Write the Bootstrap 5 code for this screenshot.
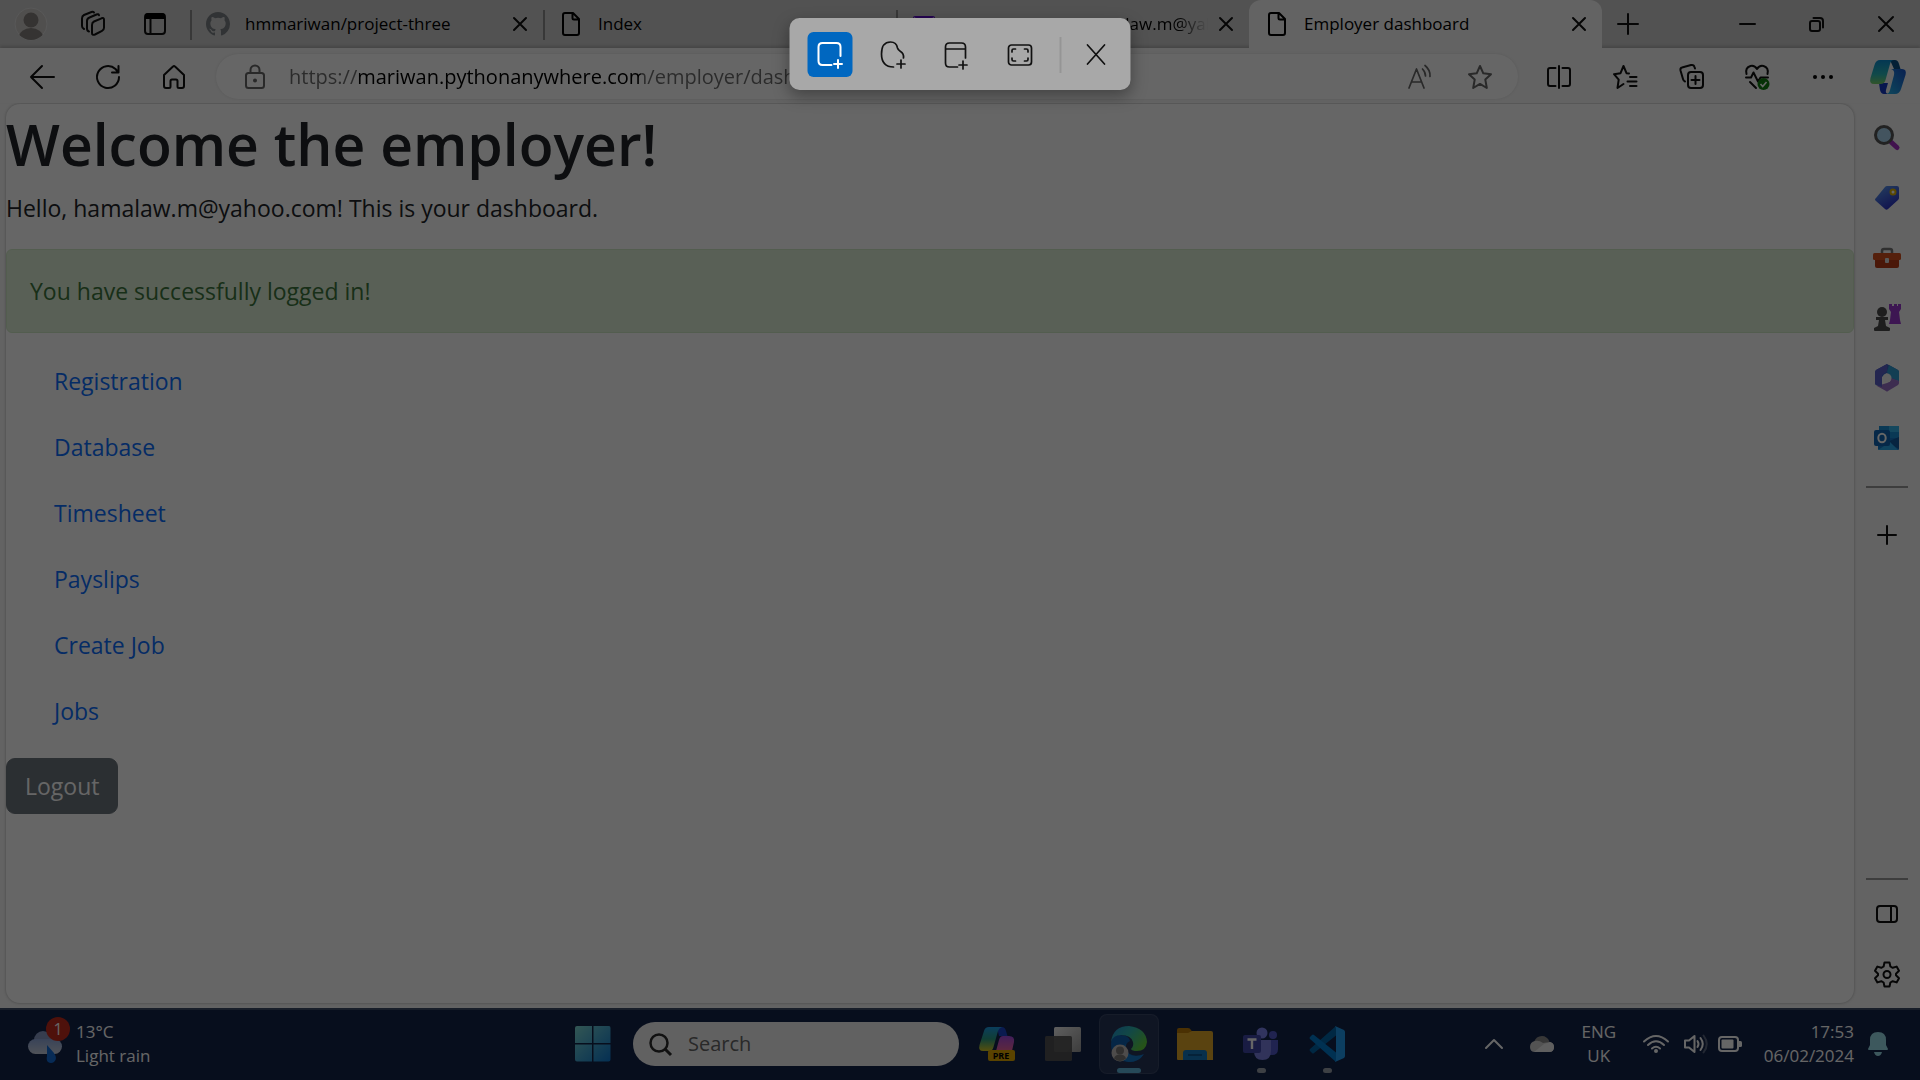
<!DOCTYPE html>
<html lang="en">
<head>
<meta charset="utf-8">
<meta name="viewport" content="width=device-width, initial-scale=1">
<title>Employer dashboard</title>
<link href="https://cdn.jsdelivr.net/npm/bootstrap@5.3.0/dist/css/bootstrap.min.css" rel="stylesheet">
<style>
  body { font-family: "Open Sans", "Noto Sans", sans-serif; background: #f7f7f7; }
  svg { display: block; flex: none; overflow: visible; }
  .line { fill: none; stroke: currentColor; stroke-width: 2; stroke-linecap: round; stroke-linejoin: round; }
  .icon-btn { border: 0; background: none; padding: 0; color: #111; display: flex; align-items: center; justify-content: center; flex: none; }

  /* tab strip */
  .tab-strip { height: 48px; background: #cdcdcd; font-size: 17px; line-height: 24px; color: #000; }
  .strip-tools { width: 190px; flex: none; }
  .strip-tools .icon-btn { width: 62px; height: 48px; }
  .browser-tab { flex: 0 1 353px; min-width: 0; padding: 0 11px 0 16px; position: relative; }
  .browser-tab + .browser-tab::before, .first-tab::before { content: ""; position: absolute; left: 0; top: 10px; height: 30px; width: 2px; background: #8c8c8c; }
  .browser-tab.active-tab { background: #f7f7f7; border-radius: 12px 12px 0 0; }
  .browser-tab.active-tab::before { display: none; }
  .tab-title { color: #000; text-decoration: none; white-space: nowrap; overflow: hidden; flex: 1; margin: 0 6px 0 15px; }
  .tab-fade { -webkit-mask-image: linear-gradient(to right, #000 88%, transparent); mask-image: linear-gradient(to right, #000 88%, transparent); }
  .tab-x { width: 24px; height: 24px; }
  .win-btn { width: 69px; height: 48px; }
  .new-tab { width: 52px; height: 48px; }

  /* toolbar */
  .nav-row { height: 55px; padding: 2px 0 0 9px; background: #f7f7f7; box-shadow: 0 -2px 3px rgba(0,0,0,.16); position: relative; }
  .active-tab { z-index: 1; }
  .nav-btn { width: 66px; height: 53px; }
  .nav-btn:last-child { width: 64px; }
  .address { height: 45px; border-radius: 23px; background: #fff; margin: 0 8px 0 9px; padding: 0 8px 0 28px; color: #666; box-shadow: 0 0 3px rgba(0,0,0,.1); }
  .address input { border: 0; outline: 0; min-width: 0; padding: 0; margin-left: 23px; font-size: 20px; line-height: 28px; color: #333;
    background: linear-gradient(to right, #6b6b6b 69px, #000 69px 352px, #6b6b6b 352px); -webkit-background-clip: text; background-clip: text; -webkit-text-fill-color: transparent; }
  .address .icon-btn { color: #666; width: 60px; height: 44px; }

  /* page */
  .page-pane { margin: 1px 0 5px 6px; padding-top: 4px; background: #fff; border-radius: 14px; overflow: hidden; box-shadow: 0 0 3px rgba(0,0,0,.3); font-size: 23px; line-height: 36px; color: #212529; }
  .page-pane h1 { font-size: 57px; line-height: 72px; font-weight: 600; margin-bottom: 10px; }
  .page-pane p { margin-bottom: 23px; }
  .page-pane .alert { padding: 23px; border-radius: 6px; margin-bottom: 15px; background: #dff0d8; border-color: #d0e9c6; color: #3c763d; }
  .page-links { padding-left: 48px; margin-bottom: 14px; }
  .page-links a { display: inline-block; padding: 15px 0; text-decoration: none; color: #0d6efd; vertical-align: top; }
  .page-pane .btn { font-size: 23px; line-height: 36px; padding: 9px 18px; border-radius: 9px; }

  /* side rail */
  .side-rail { width: 66px; flex: none; padding-top: 5px; }
  .side-rail .icon-btn { width: 66px; height: 60px; }
  .side-rail hr { width: 42px; margin: 0 0 0 12px; border-top: 2px solid #999; opacity: 1; }
  .side-rail .upper-rule { margin: 18px 0 17px 12px; }

  /* taskbar */
  .task-bar { height: 72px; background: #122349; border-top: 2px solid #3d4c66; padding-bottom: 2px; color: #fff; font-size: 17px; line-height: 24px; }
  .side-part { flex: 1 1 0; min-width: 0; }
  .weather { color: #fff; text-align: left; gap: 14px; padding-left: 28px; height: 68px; line-height: 24px; }
  .weather svg { margin-bottom: 6px; }
  .weather span { margin-left: -1px; }
  .task-btn { width: 66px; height: 68px; position: relative; }
  .task-btn.current svg { position: relative; }
  .task-btn.current::before { content: ""; position: absolute; inset: 4px 3px; border-radius: 8px; background: rgba(255,255,255,.09); border: 1px solid rgba(255,255,255,.08); }
  .task-btn.opened::after, .task-btn.current::after { content: ""; position: absolute; bottom: 5px; width: 9px; height: 5px; border-radius: 3px; background: #9aa0aa; }
  .task-btn.current::after { width: 24px; background: #5fb6dd; }
  .task-search { width: 326px; height: 44px; border-radius: 22px; background: #f3f3f3; margin: 0 5px 0 7px; padding: 0 16px; color: #222; }
  .task-search input { border: 0; outline: 0; background: none; min-width: 0; width: 100%; padding: 0; margin-left: 16px; font-size: 20px; line-height: 28px; color: #222; }
  .task-search input::placeholder { color: #666; opacity: 1; }
  .tray-btn { height: 68px; color: #fff; line-height: 24px; }
  .bell-btn { padding: 0 32px 0 14px; }
  .w-48 { width: 48px; } .w-66 { width: 66px; } .w-34 { width: 34px; }

  /* capture layer */
  .dimmer { position: absolute; inset: 0; background: rgba(0,0,0,.6); pointer-events: none; z-index: 5; }
  .capture-bar { position: absolute; z-index: 6; top: 18px; left: 50%; transform: translateX(-50%); background: #a8a8a8; border-radius: 10px; padding: 14px 12px 13px 18px; box-shadow: 0 6px 16px rgba(0,0,0,.35); }
  .capture-bar .icon-btn { width: 45px; height: 45px; border-radius: 6px; margin-right: 18px; }
  .capture-bar .chosen { background: #0067c0; color: #fff; }
  .capture-bar .bar-rule { width: 2px; height: 36px; background: #959595; margin-right: 12px; }
  .capture-bar .icon-btn:last-child { margin-right: 0; }
</style>
<script src="https://cdn.jsdelivr.net/npm/bootstrap@5.3.0/dist/js/bootstrap.bundle.min.js"></script>
</head>
<body>
<div class="position-relative min-vh-100 d-flex flex-column overflow-hidden">

  <header class="tab-strip d-flex">
    <div class="strip-tools d-flex">
      <button class="icon-btn" aria-label="Profile"><svg width="34" height="34" viewBox="0 0 34 34"><defs><clipPath id="pc"><circle cx="17" cy="17" r="16"/></clipPath></defs><circle cx="17" cy="17" r="16" fill="#c9c5c2" stroke="#ddd" stroke-width="1"/><g clip-path="url(#pc)" fill="#85817e"><circle cx="17" cy="13" r="7.500"/><ellipse cx="17" cy="30" rx="12" ry="9"/></g></svg></button>
      <button class="icon-btn" aria-label="Workspaces"><svg width="26" height="26" viewBox="0 0 26 26" class="line"><path d="M14 10.500l7.500-3.200q2.500-1 2.500 1.500v8q0 2-2 3L15 23.500q-3 1.200-3-1.500v-8q0-2.500 2-3.500z"/><path d="M9 20.500Q7 20 7 17.500V10q0-2.500 2.500-3.500l7-3q2-.8 2.500.8M4 18Q2 17 2 15V7.500Q2 5 4 4l7.500-3q1.500-.5 2.500.5"/></svg></button>
      <button class="icon-btn" aria-label="Tab actions"><svg width="24" height="24" viewBox="0 0 24 24"><rect x="2" y="2" width="20" height="20" rx="3" class="line"/><path d="M2 2.500Q3 1 5 1h14q2 0 3 1.500V7H2z"/><path d="M7.500 7v15" class="line"/></svg></button>
    </div>
    <div class="browser-tab first-tab d-flex align-items-center">
      <svg width="24" height="24" viewBox="0 0 16 16"><path fill="#7b8085" d="M8 0C3.580 0 0 3.580 0 8c0 3.540 2.290 6.530 5.470 7.590.4.070.55-.17.55-.38 0-.19-.01-.82-.01-1.490-2.010.37-2.530-.49-2.690-.94-.09-.23-.48-.94-.82-1.130-.28-.15-.68-.52-.01-.53.63-.01 1.080.58 1.230.82.72 1.210 1.870.87 2.330.66.07-.52.28-.87.51-1.070-1.780-.2-3.640-.89-3.640-3.950 0-.87.31-1.590.82-2.150-.08-.2-.36-1.020.08-2.120 0 0 .67-.21 2.200.82a7.700 7.700 0 0 1 4 0c1.530-1.040 2.200-.82 2.200-.82.44 1.100.16 1.920.08 2.120.51.56.82 1.270.82 2.150 0 3.070-1.870 3.750-3.650 3.950.29.25.54.73.54 1.480 0 1.070-.01 1.930-.01 2.200 0 .21.15.46.55.38A8 8 0 0 0 16 8c0-4.420-3.580-8-8-8z"/></svg>
      <a class="tab-title" href="#">hmmariwan/project-three</a>
      <button class="icon-btn tab-x" aria-label="Close tab"><svg width="12" height="12" viewBox="0 0 12 12" class="line"><path d="M0 0l12 12M12 0L0 12"/></svg></button>
    </div>
    <div class="browser-tab d-flex align-items-center">
      <svg width="24" height="24" viewBox="0 0 24 24" class="line"><path d="M6 1h8l6 6v14q0 2-2 2H6q-2 0-2-2V3q0-2 2-2zM13.500 1v5q0 1.500 1.500 1.500h5"/></svg>
      <a class="tab-title" href="#">Index</a>
      <span class="tab-x"></span>
    </div>
    <div class="browser-tab d-flex align-items-center">
      <svg width="24" height="24" viewBox="0 0 24 24"><rect x="1" y="4" width="22" height="17" rx="2" fill="#5a0cc8"/><path d="M2 6l10 8 10-8" fill="none" stroke="#fff" stroke-width="2"/></svg>
      <a class="tab-title tab-fade" href="#">(9,142 unread) - hamalaw.m@yahoo.com</a>
      <button class="icon-btn tab-x" aria-label="Close tab"><svg width="12" height="12" viewBox="0 0 12 12" class="line"><path d="M0 0l12 12M12 0L0 12"/></svg></button>
    </div>
    <div class="browser-tab active-tab d-flex align-items-center">
      <svg width="24" height="24" viewBox="0 0 24 24" class="line"><path d="M6 1h8l6 6v14q0 2-2 2H6q-2 0-2-2V3q0-2 2-2zM13.500 1v5q0 1.500 1.500 1.500h5"/></svg>
      <a class="tab-title" href="#">Employer dashboard</a>
      <button class="icon-btn tab-x" aria-label="Close tab"><svg width="12" height="12" viewBox="0 0 12 12" class="line"><path d="M0 0l12 12M12 0L0 12"/></svg></button>
    </div>
    <button class="icon-btn new-tab" aria-label="New tab"><svg width="20" height="20" viewBox="0 0 20 20" class="line"><path d="M10 0v20M0 10h20"/></svg></button>
    <div class="d-flex ms-auto">
      <button class="icon-btn win-btn" aria-label="Minimise"><svg width="15" height="15" viewBox="0 0 15 15" class="line"><path d="M0 7h15"/></svg></button>
      <button class="icon-btn win-btn" aria-label="Restore"><svg width="15" height="15" viewBox="0 0 15 15" class="line"><rect x="1" y="4" width="10" height="10" rx="2"/><path d="M4.500 1H11q3 0 3 3v6.500"/></svg></button>
      <button class="icon-btn win-btn" aria-label="Close"><svg width="14" height="14" viewBox="0 0 14 14" class="line"><path d="M0 0l14 14M14 0L0 14"/></svg></button>
    </div>
  </header>

  <nav class="nav-row d-flex align-items-center" aria-label="Browser">
    <button class="icon-btn nav-btn" aria-label="Back"><svg width="24" height="24" viewBox="0 0 24 24" class="line"><path d="M24 12H1M12 1L1 12l11 11"/></svg></button>
    <button class="icon-btn nav-btn" aria-label="Refresh"><svg width="24" height="24" viewBox="0 0 24 24" class="line"><path d="M23 12a11 11 0 1 1-3.500-8L22 7M22.500 1v6.500H16"/></svg></button>
    <button class="icon-btn nav-btn" aria-label="Home"><svg width="24" height="24" viewBox="0 0 24 24" class="line"><path d="M2 10L11 1.500q1-1 2 0L22 10v11q0 2-2 2h-3q-1.500 0-1.500-1.500V16q0-1.500-1.500-1.500h-4Q8.500 14.500 8.500 16v5.500Q8.500 23 7 23H4q-2 0-2-2z"/></svg></button>
    <div class="address flex-grow-1 d-flex align-items-center">
      <svg width="22" height="24" viewBox="0 0 22 24" class="line"><rect x="2" y="8" width="18" height="15" rx="2.500"/><path d="M6.500 8V5a4.500 4.500 0 0 1 9 0v3"/><circle cx="11" cy="15.500" r="1" fill="currentColor"/></svg>
      <input class="flex-grow-1" type="text" aria-label="Address" value="https://mariwan.pythonanywhere.com/employer/dashboard">
      <button class="icon-btn" aria-label="Read aloud"><svg width="24" height="24" viewBox="0 0 24 24" class="line"><path d="M1 23L8.500 4 16 23M3.500 17h10M14.500 4q3 3 3 7M17 .5q5.500 4.500 5 11" stroke-width="1.700"/></svg></button>
      <button class="icon-btn" aria-label="Favourite"><svg width="24" height="24" viewBox="0 0 24 24" class="line"><path d="M12 1l3.300 7.300 7.700.9-5.700 5.400L18.800 23 12 18.900 5.200 23l1.500-8.400L1 9.200l7.700-.9z"/></svg></button>
    </div>
    <button class="icon-btn nav-btn" aria-label="Split screen"><svg width="24" height="24" viewBox="0 0 24 24" class="line"><path d="M12 1v22M8.500 3H3Q1 3 1 5v14q0 2 2 2h5.500M15.500 3H21q2 0 2 2v14q0 2-2 2h-5.500"/></svg></button>
    <button class="icon-btn nav-btn" aria-label="Favourites"><svg width="24" height="24" viewBox="0 0 24 24" class="line"><path d="M16 8.500l-2.500-.3L10.500 1 7.500 8.200 1 9.200l4.700 5.400L4.500 23l6-4M17 12h6.500M14.500 16.500h9M17 21h6.500"/></svg></button>
    <button class="icon-btn nav-btn" aria-label="Collections"><svg width="25" height="25" viewBox="0 0 25 25" class="line"><rect x="9" y="8" width="15" height="16" rx="3"/><path d="M16.500 12v8M12.500 16h8M6 17.500q-1.500-.5-2-2.500L1.500 6.500Q1 4 3 3.500l9-2.500q3-.5 3.500 2l.5 1.500"/></svg></button>
    <button class="icon-btn nav-btn" aria-label="Browser essentials"><svg width="26" height="26" viewBox="0 0 26 26"><path class="line" d="M2.500 10Q1 3.500 6.500 2 10.500 1 13 5q2.500-4 6.500-3Q25 3.500 23.500 10M2 13.500h5l2.500-5 4.500 9 2.500-4H24M6 18l6 6"/><circle cx="19.500" cy="20" r="6" fill="#107c10"/><path d="M16.500 20l2.200 2.500L22.500 18" fill="none" stroke="#fff" stroke-width="1.600"/></svg></button>
    <button class="icon-btn nav-btn" aria-label="Settings and more"><svg width="22" height="6" viewBox="0 0 22 6"><circle cx="3" cy="3" r="2"/><circle cx="11" cy="3" r="2"/><circle cx="19" cy="3" r="2"/></svg></button>
    <button class="icon-btn nav-btn" aria-label="Copilot"><svg width="36" height="34" viewBox="0 0 36 34"><defs><linearGradient id="ca" x1="0" y1="0" x2="0" y2="1"><stop offset="0" stop-color="#0a8bd0"/><stop offset=".6" stop-color="#2bb8b8"/><stop offset="1" stop-color="#7bd36a"/></linearGradient><linearGradient id="cb" x1="1" y1="0" x2="0" y2="1"><stop offset="0" stop-color="#1650c8"/><stop offset="1" stop-color="#26b4e6"/></linearGradient></defs><path d="M9 23h9l-2 7q-1 4 3 4h-5q-3 0-4-4z" fill="#1638c4"/><path d="M20 0h5q3 0 4 4l1.500 5H24z" fill="#0a4f86"/><path d="M10 0h14q-3 0-4 4l-4.500 16q-1 4-5 4H4q-5 0-3.500-6L4.500 5Q6 0 10 0z" fill="url(#ca)"/><path d="M25.500 9H32q5 0 3.500 6L31 29q-1.500 5-6 5h-9q3 0 4-4l4-15q1-5-3-6z" fill="url(#cb)"/></svg></button>
  </nav>

  <div class="d-flex flex-grow-1">
    <main class="page-pane flex-grow-1">
      <h1>Welcome the employer!</h1>
      <p>Hello, hamalaw.m@yahoo.com! This is your dashboard.</p>
      <div class="alert" role="alert">You have successfully logged in!</div>
      <ul class="page-links list-unstyled">
        <li><a href="#">Registration</a></li>
        <li><a href="#">Database</a></li>
        <li><a href="#">Timesheet</a></li>
        <li><a href="#">Payslips</a></li>
        <li><a href="#">Create Job</a></li>
        <li><a href="#">Jobs</a></li>
      </ul>
      <button class="btn btn-secondary d-block">Logout</button>
    </main>

    <aside class="side-rail d-flex flex-column">
      <button class="icon-btn" aria-label="Search"><svg width="26" height="26" viewBox="0 0 26 26"><path d="M17 17l6 5.500" stroke="#a32fc4" stroke-width="5" stroke-linecap="round"/><circle cx="10" cy="10" r="8.500" fill="#a8d3ee" stroke="#555" stroke-width="3"/></svg></button>
      <button class="icon-btn" aria-label="Shopping"><svg width="26" height="26" viewBox="0 0 26 26"><defs><linearGradient id="tg" x1="0" y1="0" x2=".6" y2="1"><stop offset="0" stop-color="#5da2f0"/><stop offset="1" stop-color="#2b2fc4"/></linearGradient></defs><path d="M13 1h10q2 0 2 2v10q0 1-1 2L14 24q-1.500 1.500-3 0L2 16q-2-1.500 0-3L11 2q1-1 2-1z" fill="url(#tg)"/><circle cx="19" cy="7" r="2.500" fill="#fff" stroke="#e0b400" stroke-width="2"/></svg></button>
      <button class="icon-btn" aria-label="Tools"><svg width="28" height="22" viewBox="0 0 28 22"><path d="M9 6V4q0-2 2-2h6q2 0 2 2v2" fill="none" stroke="#777" stroke-width="2.500"/><rect x="2" y="9" width="24" height="12" rx="2" fill="#b83a14"/><rect x="0" y="6" width="28" height="7" rx="1.500" fill="#d4501e"/><rect x="12" y="11" width="4" height="5" rx="1" fill="#ddd"/></svg></button>
      <button class="icon-btn" aria-label="Games"><svg width="28" height="28" viewBox="0 0 28 28"><path d="M16 0h3v2h2V0h3v2h1V0h3v5l-2 3 1 8 1 4H16l1-4 1-8-2-3z" fill="#9a38cc"/><g fill="#4b4b4b"><circle cx="9" cy="8" r="5"/><path d="M3 13h12v3h-3l1 6 4 2v2q0 1-1 1H2q-1 0-1-1v-2l4-2 1-6H3z"/></g></svg></button>
      <button class="icon-btn" aria-label="Microsoft 365"><svg width="26" height="28" viewBox="0 0 26 28"><path d="M13 0l11 6q1 1 1 2v9l-8-2-4-6-5 4V23l-6-2q-1-1-1-2V9q0-2 1-3z" fill="#3f63c4"/><path d="M15 1l9 5q1 1 1 2v9l-8-3-4-6z" fill="#2e9cd0"/><path d="M25 17v2q0 1-1 2l-10 6q-1 1-2 0L3 22l10-3 4-3V14z" fill="#9a70c8"/><path d="M2 21l6 2V11l5-4V0L2 6Q1 7 1 9v10q0 1 1 2z" fill="#5a5fc8"/><circle cx="13" cy="14" r="4.500" fill="#f3f3f3"/></svg></button>
      <button class="icon-btn" aria-label="Outlook"><svg width="26" height="26" viewBox="0 0 26 26"><rect x="5" y="1" width="20" height="13" fill="#1b8fd4"/><rect x="15" y="1" width="10" height="6" fill="#35b5ea"/><path d="M4 24V13h21v11q0 1-1 1H5q-1 0-1-1z" fill="#1478c8"/><path d="M25 12v12L13 17z" fill="#0f5aa0"/><path d="M4 25l12-8 8 8z" fill="#28a8ea"/><rect x="0" y="5" width="16" height="16" rx="2" fill="#0f64b4"/><ellipse cx="8" cy="13" rx="3.700" ry="4.200" fill="none" stroke="#fff" stroke-width="2"/></svg></button>
      <hr class="upper-rule">
      <button class="icon-btn" aria-label="Customise"><svg width="18" height="18" viewBox="0 0 18 18" class="line"><path d="M9 0v18M0 9h18"/></svg></button>
      <hr class="mt-auto">
      <button class="icon-btn mt-1" aria-label="Toggle sidebar"><svg width="22" height="18" viewBox="0 0 22 18" class="line"><rect x="1" y="1" width="20" height="16" rx="3"/><path d="M15 1v16"/></svg></button>
      <button class="icon-btn mb-1" aria-label="Settings"><svg width="26" height="26" viewBox="0 0 26 26" class="line"><path d="M10.500 1.500h5l.9 4 2.300 1.300 3.900-1.200 2.400 4.200-3 2.900v1.600l3 2.900-2.400 4.200-3.900-1.200-2.300 1.300-.9 4h-5l-.9-4-2.300-1.300-3.900 1.200L1 17.200l3-2.900v-1.600L1 9.800l2.400-4.200 3.900 1.200 2.300-1.300z"/><circle cx="13" cy="13.500" r="3.500"/></svg></button>
    </aside>
  </div>

  <footer class="task-bar d-flex align-items-center">
    <div class="side-part d-flex">
      <button class="icon-btn weather" aria-label="Weather">
        <svg width="35" height="46" viewBox="0 0 35 46"><defs><linearGradient id="wc" x1="0" y1="0" x2="0" y2="1"><stop offset="0" stop-color="#8fa8dc"/><stop offset="1" stop-color="#c8cedb"/></linearGradient></defs><circle cx="15" cy="22" r="9" fill="#8798c4"/><rect x="0" y="21" width="34" height="15" rx="7.500" fill="url(#wc)"/><path d="M19 27l7 8q4 6 0 9-3 2-6 0-2-2-1-6z" fill="#126bd8"/><circle cx="30" cy="11" r="12" fill="#c42b1c"/><text x="30" y="17" text-anchor="middle" font-size="16" fill="#fff">1</text></svg>
        <span>13°C<br>Light rain</span>
      </button>
    </div>
    <button class="icon-btn task-btn" aria-label="Start"><svg width="36" height="36" viewBox="0 0 36 36"><defs><linearGradient id="wg" gradientUnits="userSpaceOnUse" x1="0" y1="0" x2="36" y2="36"><stop offset="0" stop-color="#7fd8d2"/><stop offset="1" stop-color="#0a76cf"/></linearGradient></defs><path fill="url(#wg)" d="M2 0h15v17H0V2q0-2 2-2zM18.500 0H34q1.500 0 1.500 2v15h-17zM0 18.500h17v17H2q-2 0-2-2zM18.500 18.500h17v15q0 2-2 2h-15z"/></svg></button>
    <label class="task-search d-flex align-items-center"><svg width="23" height="23" viewBox="0 0 23 23"><circle cx="10" cy="10" r="8.500" fill="none" stroke="#2b2b2b" stroke-width="2.500"/><path d="M16 16l6 6" stroke="#2b2b2b" stroke-width="3"/></svg><input type="text" placeholder="Search" aria-label="Search"></label>
    <button class="icon-btn task-btn" aria-label="Copilot preview"><svg width="36" height="36" viewBox="0 0 36 36"><defs><linearGradient id="pa" x1="0" y1="0" x2="0" y2="1"><stop offset="0" stop-color="#1c9be8"/><stop offset=".5" stop-color="#2a9c84"/><stop offset="1" stop-color="#d8c822"/></linearGradient><linearGradient id="pb" x1="0" y1="0" x2="0" y2="1"><stop offset="0" stop-color="#a04be0"/><stop offset="1" stop-color="#f0649a"/></linearGradient></defs><path d="M18 1h5q3 0 4 4l1.500 5H20z" fill="#1b44c8"/><path d="M10 1h13q-3 1-4 4l-4.500 16q-1 4-4 4H4q-5 0-3.500-6L5 5Q6 1 10 1z" fill="url(#pa)"/><path d="M24 10h6q6 0 5 6l-2 9H17l3-11q1-4 4-4z" fill="url(#pb)"/><rect x="9" y="24" width="27" height="11" rx="2" fill="#e0a800"/><text x="22" y="33" text-anchor="middle" font-size="9" font-weight="700" fill="#000">PRE</text></svg></button>
    <button class="icon-btn task-btn" aria-label="Task view"><svg width="36" height="34" viewBox="0 0 36 34"><defs><linearGradient id="tv" x1="0" y1="0" x2="1" y2="1"><stop offset="0" stop-color="#eee"/><stop offset="1" stop-color="#999"/></linearGradient></defs><rect x="9" y="0" width="27" height="25" rx="1.500" fill="url(#tv)"/><rect x="0" y="9" width="27" height="25" rx="1.500" fill="#555" opacity=".93"/></svg></button>
    <button class="icon-btn task-btn current" aria-label="Edge"><svg width="36" height="36" viewBox="0 0 36 36"><defs><linearGradient id="ea" x1="0" y1="0" x2="1" y2=".6"><stop offset="0" stop-color="#1f8fd8"/><stop offset=".5" stop-color="#2fb5ae"/><stop offset="1" stop-color="#5fd040"/></linearGradient></defs><path d="M0 18Q0 8 9 9q9 0 10 6-5 2-4 8 3 9 17 6-6 8-16 7Q0 33 0 18z" fill="#0e5fae"/><path d="M15 18q-2 6 3 10 6 4 15 0-5 8-15 8-8-1-9-9 0-6 6-9z" fill="#1678c8"/><path d="M0 16Q2 0 18 0q17 2 18 16-1 9-10 9-5 0-6-2 3-3 2-7-2-7-12-7Q2 9 0 16z" fill="url(#ea)"/><circle cx="9" cy="27" r="8.500" fill="#c2bfbc"/><circle cx="9" cy="24.500" r="4" fill="#7c7875"/><path d="M3 32.500q1-4 6-4t6 4q-6 5-12 0z" fill="#7c7875"/></svg></button>
    <button class="icon-btn task-btn" aria-label="File Explorer"><svg width="36" height="34" viewBox="0 0 36 34"><path d="M0 3q0-2 2-2h9q2 0 3 2l2 3H0z" fill="#bb7a08"/><path d="M0 6h11l4-2h19q2 0 2 2v27H1q-1 0-1-1z" fill="#e2a828"/><path d="M6 33v-7q0-3 3-3h18q3 0 3 3v7z" fill="#1478bd"/><path d="M11 28h14" stroke="#0b4a80" stroke-width="1.500"/></svg></button>
    <button class="icon-btn task-btn opened" aria-label="Teams"><svg width="36" height="34" viewBox="0 0 36 34"><circle cx="19" cy="6" r="5.500" fill="#7b83eb"/><circle cx="30" cy="8" r="4" fill="#5059c9"/><path d="M26 13h9v9q0 6-6 6-4 0-5-2z" fill="#5059c9"/><path d="M11 13h17v11q0 9-8.500 9T11 24z" fill="#7b7fe0"/><rect x="0" y="8" width="18" height="18" rx="2" fill="#4048a8"/><path d="M4.500 12.500h9M9 12.500V22" stroke="#fff" stroke-width="2.400"/></svg></button>
    <button class="icon-btn task-btn opened" aria-label="Visual Studio Code"><svg width="36" height="36" viewBox="0 0 36 36"><path d="M27 0L1 23q-1 1 0 2l2 2q1 1 2 0L27 9.500z" fill="#0065a9"/><path d="M27 36L1 13q-1-1 0-2l2-2q1-1 2 0L27 26.500z" fill="#007acc"/><path d="M26 0l9 4q1 1 1 2v24q0 1-1 2l-9 4q1-1 1-3V3q0-2-1-3z" fill="#1f9cf0"/></svg></button>
    <div class="side-part d-flex justify-content-end align-items-center">
      <button class="icon-btn tray-btn w-48" aria-label="Show hidden icons"><svg width="16" height="10" viewBox="0 0 16 10" class="line"><path d="M0 9l8-8 8 8"/></svg></button>
      <button class="icon-btn tray-btn w-48" aria-label="OneDrive"><svg width="24" height="16" viewBox="0 0 24 16"><path d="M4 6q2-6 8-6 5 0 7.500 5.500L12 10 2 9z" fill="#8a8a8a"/><path d="M5 5q4-1 8 2l7-1q4 1 4 5 0 5-5 5H5q-5 0-5-5 0-5 5-6z" fill="#cfcfcf"/><path d="M14 8l6-2q4 1 4 5 0 5-5 5H4z" fill="#eee"/></svg></button>
      <button class="icon-btn tray-btn w-66 text-center">ENG<br>UK</button>
      <button class="icon-btn tray-btn" aria-label="Network, sound and battery">
        <span class="w-48 d-flex justify-content-center"><svg width="24" height="18" viewBox="0 0 24 18" class="line"><path d="M0 6.500q12-11 24 0M4 10q8-7.500 16 0M8 13.500q4-3.500 8 0"/><circle cx="12" cy="16" r="1" fill="currentColor"/></svg></span>
        <span class="w-34 d-flex ps-1"><svg width="24" height="20" viewBox="0 0 24 20" class="line"><path d="M1 6.500h4L10.500 2v16L5 13.500H1zM13.500 7q2 3 0 6M16.500 4q4.500 6 0 12"/><path d="M19.500 1.500q6.500 8.500 0 17" opacity=".3"/></svg></span>
        <span class="w-34 d-flex ps-1"><svg width="24" height="16" viewBox="0 0 24 16"><rect x="1" y="1" width="19" height="14" rx="3" class="line"/><rect x="3.500" y="3.500" width="12" height="9" rx="1" fill="currentColor"/><path d="M21 5h1.500q1.500 0 1.500 1.500v3q0 1.500-1.500 1.500H21z" fill="currentColor"/></svg></span>
      </button>
      <button class="icon-btn tray-btn text-end ps-3">17:53<br>06/02/2024</button>
      <button class="icon-btn tray-btn bell-btn" aria-label="Notifications"><svg width="20" height="24" viewBox="0 0 20 24"><path d="M10 0q8 0 8 8v5l2 4q0 1-1 1H1q-1 0-1-1l2-4V8q0-8 8-8zM6 20h8q-1 4-4 4t-4-4z" fill="#9adbe8"/></svg></button>
    </div>
  </footer>

  <div class="dimmer"></div>
  <div class="capture-bar d-flex align-items-center" role="toolbar" aria-label="Capture">
    <button class="icon-btn chosen" aria-label="Rectangle"><svg width="25" height="25" viewBox="0 0 25 25" class="line"><path d="M14 23H5q-4 0-4-4V5q0-4 4-4h14q4 0 4 4v9M20.500 18v8M16.500 22h8"/></svg></button>
    <button class="icon-btn" aria-label="Freeform"><svg width="25" height="27" viewBox="0 0 25 27" class="line"><path d="M13 26Q1 26 1 13 1 1 10 1q6 0 7 6 .5 2 3 3.500 3.500 2 3 6.500M20.500 19v8M16.500 23h8" stroke-width="1.700"/></svg></button>
    <button class="icon-btn" aria-label="Window"><svg width="23" height="26" viewBox="0 0 23 26" class="line"><path d="M13 25H5q-4 0-4-4V5q0-4 4-4h12q4 0 4 4v11M1 7h20M18.500 19v8M14.500 23h8" stroke-width="1.700"/></svg></button>
    <button class="icon-btn" aria-label="Full screen"><svg width="24" height="20" viewBox="0 0 24 20" class="line"><g stroke-width="1.700"><rect x="1" y="0" width="23" height="20" rx="3"/><path d="M4.500 7V5.500Q4.500 4 6 4h2M4.500 13v1.500Q4.500 16 6 16h2M20.500 7V5.500Q20.500 4 19 4h-2M20.500 13v1.500q0 1.500-1.500 1.500h-2"/></g></svg></button>
    <span class="bar-rule"></span>
    <button class="icon-btn" aria-label="Close capture"><svg width="17" height="19" viewBox="0 0 17 19" class="line"><path d="M0 0l17 19M17 0L0 19" stroke-width="1.700"/></svg></button>
  </div>
</div>
</body>
</html>
